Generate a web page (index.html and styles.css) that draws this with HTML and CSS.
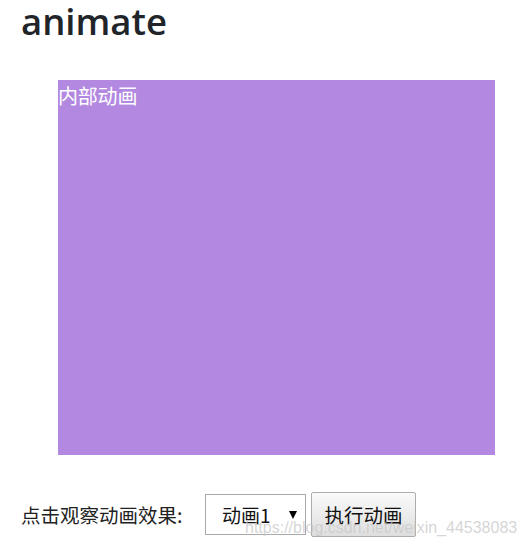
FILE: index.html
```html
<!DOCTYPE html>
<html lang="zh-CN">
<head>
<meta charset="utf-8">
<title>animate</title>
<link rel="stylesheet" href="styles.css">
</head>
<body>
  <h1 class="title">animate</h1>
  <div class="stage">
    <div class="box">内部动画</div>
  </div>
  <div class="controls">
    <span class="label">点击观察动画效果:</span>
    <span class="select-wrap">
      <select class="select">
        <option>动画1</option>
        <option>动画2</option>
      </select>
    </span>
    <button class="run" type="button">执行动画</button>
  </div>
  <div class="watermark">https://blog.csdn.net/weixin_44538083</div>
</body>
</html>
```

FILE: styles.css
```css
html, body {
  margin: 0;
  padding: 0;
  background: #fff;
}

body {
  position: relative;
  width: 529px;
  height: 548px;
  overflow: hidden;
  padding: 0 21px;
  box-sizing: border-box;
  font-family: "Noto Sans CJK SC", "Noto Sans", sans-serif;
  color: #222;
}

.title {
  margin: 0;
  padding-top: 2px;
  height: 78px;
  font-family: "Open Sans", sans-serif;
  font-weight: 600;
  font-size: 36.5px;
  line-height: 38px;
  color: #212529;
  letter-spacing: 0;
}

.stage {
  padding-left: 37px;
}

.box {
  width: 437px;
  height: 375px;
  background: #b388e0;
  color: #fff;
  font-size: 20px;
  line-height: 32px;
  letter-spacing: -0.2px;
}

.controls {
  display: flex;
  align-items: center;
  margin-top: 37px;
  height: 45px;
}

.label {
  font-size: 19.5px;
  color: #222;
  width: 184px;
  white-space: nowrap;
}

.select-wrap {
  position: relative;
  display: inline-block;
  height: 41px;
}

.select {
  -webkit-appearance: none;
  appearance: none;
  width: 101px;
  height: 41px;
  border: 1px solid #a9a9a9;
  border-radius: 0;
  background: #fff;
  padding: 0 0 0 16px;
  margin: 0;
  font-family: "Noto Sans CJK SC", sans-serif;
  font-size: 19px;
  color: #111;
}

.select-wrap::after {
  content: "";
  position: absolute;
  right: 9px;
  top: 17px;
  border-left: 4px solid transparent;
  border-right: 4px solid transparent;
  border-top: 8px solid #000;
}

.run {
  margin-left: 5px;
  width: 105px;
  height: 45px;
  padding: 0;
  border: 1px solid #adadad;
  border-radius: 2px;
  background: linear-gradient(#fafafa, #dedede);
  font-family: "Noto Sans CJK SC", sans-serif;
  font-size: 19.5px;
  color: #111;
}

.watermark {
  position: absolute;
  left: 245px;
  top: 519px;
  font-family: "Liberation Sans", Arial, sans-serif;
  font-size: 16px;
  line-height: 18px;
  color: rgba(200, 200, 200, 0.75);
  white-space: nowrap;
  pointer-events: none;
}
```
